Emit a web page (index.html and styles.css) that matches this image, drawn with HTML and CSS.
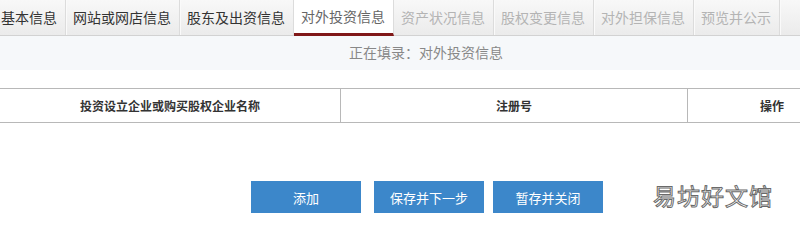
FILE: index.html
```html
<!DOCTYPE html>
<html lang="zh-CN">
<head>
    <meta charset="UTF-8">
    <title>对外投资信息</title>
    <link rel="stylesheet" href="styles.css">
</head>
<body>
    <div class="page">
        <ul class="tabs">
            <li class="done">基本信息</li>
            <li class="done">网站或网店信息</li>
            <li class="done">股东及出资信息</li>
            <li class="active">对外投资信息</li>
            <li>资产状况信息</li>
            <li>股权变更信息</li>
            <li>对外担保信息</li>
            <li>预览并公示</li>
        </ul>

        <div class="status">正在填录：对外投资信息</div>

        <table class="grid">
            <thead>
                <tr>
                    <th class="col-name">投资设立企业或购买股权企业名称</th>
                    <th class="col-reg">注册号</th>
                    <th class="col-op">操作</th>
                </tr>
            </thead>
        </table>

        <div class="actions">
            <button type="button" class="btn btn-add">添加</button>
            <button type="button" class="btn btn-next">保存并下一步</button>
            <button type="button" class="btn btn-close">暂存并关闭</button>
        </div>

        <div class="watermark">易坊好文馆</div>
    </div>
</body>
</html>
```

FILE: styles.css
```css
body {
    margin: 0;
    padding: 0;
    background: #fff;
    font-family: 'Noto Sans CJK SC', 'Liberation Sans', sans-serif;
    overflow: hidden;
}

.page {
    position: relative;
    width: 800px;
    height: 225px;
    overflow: hidden;
}

.tabs {
    list-style: none;
    margin: 0;
    padding: 0;
    display: flex;
    height: 35px;
    background: linear-gradient(#f8f8f8, #ebebeb);
    border-bottom: 1px solid #d2d2d2;
}

.tabs li {
    padding: 0 8px 0 7px;
    height: 35px;
    line-height: 34px;
    font-size: 14px;
    color: #b4b4b4;
    border-right: 1px solid #dcdcdc;
    box-shadow: 1px 0 0 #fafafa;
    box-sizing: border-box;
}

.tabs li:first-child {
    padding-left: 1px;
}

.tabs li.done {
    color: #333;
}

.tabs li.active {
    background: #fff;
    color: #666;
    border-bottom: 3px solid #801818;
    height: 36px;
    box-shadow: none;
    line-height: 33px;
}

.status {
    height: 34px;
    line-height: 32px;
    padding-left: 52px;
    background: #f6f8fa;
    color: #888;
    font-size: 14px;
    text-align: center;
}

.grid {
    width: 100%;
    margin-top: 18px;
    border-collapse: collapse;
}

.grid th {
    height: 33px;
    padding: 0;
    border-top: 1px solid #b8b8b8;
    border-bottom: 1px solid #b8b8b8;
    border-left: 1px solid #b8b8b8;
    font-size: 12px;
    font-weight: bold;
    color: #333;
    background: #fff;
}

.grid th:first-child {
    border-left: none;
}

.col-name {
    width: 340px;
}

.col-reg {
    width: 346px;
}

.grid th.col-op {
    text-align: left;
    padding-left: 72px;
}

.actions {
    display: flex;
    justify-content: center;
    gap: 13px;
    margin-top: 58px;
    padding-left: 54px;
}

.btn {
    width: 110px;
    height: 32px;
    border: none;
    background: #3c87ca;
    color: #fff;
    font-family: inherit;
    font-size: 13px;
    cursor: pointer;
}

.btn-close {
    margin-left: -4px;
}

.watermark {
    position: absolute;
    left: 653px;
    top: 178px;
    font-size: 23px;
    color: #fff;
    -webkit-text-stroke: 1px #6a6a6a;
    letter-spacing: 1px;
}
```
